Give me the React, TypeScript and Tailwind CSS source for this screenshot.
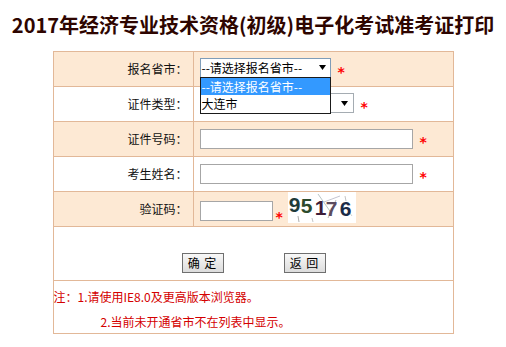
import React from "react";

const cjk = { fontFamily: '"Noto Sans CJK SC", "Noto Sans", sans-serif' };

function Star({ className = "" }: { className?: string }) {
  return (
    <span
      className={"text-[#ff0000] text-[14px] font-bold leading-none " + className}
      style={{ fontFamily: '"DejaVu Sans", sans-serif' }}
    >
      *
    </span>
  );
}

function Arrow() {
  return (
    <svg width="7" height="5" viewBox="0 0 7 5" className="shrink-0">
      <polygon points="0,0 7,0 3.5,5" fill="#000" />
    </svg>
  );
}

function Row({ label, shaded, children }: { label: string; shaded?: boolean; children?: React.ReactNode }) {
  return (
    <div className={"flex h-[35px] border-b border-[#e2b898] " + (shaded ? "bg-[#fde9d4]" : "bg-white")}>
      <div className="w-[140px] border-r border-[#e2b898] flex items-center justify-end pr-[5px] text-[12px] text-[#111]">
        {label}
      </div>
      <div className="flex-1 flex items-center pl-[6px] relative">{children}</div>
    </div>
  );
}

function Captcha() {
  return (
    <div className="relative w-[68px] h-[31px] bg-white ml-[5px] self-start mt-[0px] overflow-hidden">
      <svg className="absolute inset-0" width="68" height="31" viewBox="0 0 68 31">
        <line x1="30" y1="2" x2="44" y2="22" stroke="#9aa" strokeWidth="0.7" />
        <line x1="36" y1="10" x2="52" y2="4" stroke="#aab" strokeWidth="0.7" />
        <line x1="40" y1="26" x2="48" y2="8" stroke="#999" strokeWidth="0.7" />
        <line x1="10" y1="24" x2="11" y2="30" stroke="#888" strokeWidth="0.7" />
        <line x1="24" y1="26" x2="25" y2="30" stroke="#aaa" strokeWidth="0.7" />
        <line x1="57" y1="4" x2="58" y2="9" stroke="#aaa" strokeWidth="0.7" />
        <line x1="61" y1="20" x2="64" y2="24" stroke="#bbb" strokeWidth="0.7" />
      </svg>
      <div
        className="relative flex items-start pl-[1px] pt-[2px] text-[21px] font-bold leading-none"
        style={{ fontFamily: '"Liberation Sans", Arial, sans-serif' }}
      >
        <span className="text-[#1e3b3a] w-[12px]">9</span>
        <span className="text-[#2c4a2c] w-[12px] mt-[1px]">5</span>
        <span className="text-[#3d1c38] w-[11px] ml-[2px] mt-[3px]">1</span>
        <span className="text-[#5d4c5e] w-[13px] mt-[4px]">7</span>
        <span className="text-[#1b2b48] w-[12px] ml-[1px] mt-[4px]">6</span>
      </div>
    </div>
  );
}

export default function App() {
  return (
    <div className="w-[506px] h-[347px] bg-white overflow-hidden" style={cjk}>
      <div className="h-[51px] flex items-center justify-center pb-[2px]">
        <h1 className="text-[20px] font-bold text-[#2e0500] tracking-[0px] whitespace-nowrap">
          2017年经济专业技术资格(初级)电子化考试准考证打印
        </h1>
      </div>
      <div className="w-[401px] mx-auto border-l border-r border-t border-[#e2b898]">
        <Row label="报名省市：" shaded>
          <div className="w-[131px] h-[20px] mt-[-3px] bg-white border border-[#7f9db9] flex items-center justify-between pl-[1px] pr-[4px] text-[12px] text-black">
            <span>--请选择报名省市--</span>
            <Arrow />
          </div>
          <Star className="ml-[7px] mt-[5px]" />
          <div className="absolute left-[6px] top-[25px] w-[131px] h-[37px] bg-white border border-[#1a1a1a] z-10 text-[12px]">
            <div className="h-[17px] bg-[#3399ff] text-white flex items-center pl-[1px]">--请选择报名省市--</div>
            <div className="h-[18px] text-black flex items-center pl-[1px]">大连市</div>
          </div>
        </Row>
        <Row label="证件类型：">
          <div className="w-[154px] h-[20px] mt-[-2px] bg-white border border-[#a5acb2] flex items-center justify-end pr-[5px]">
            <Arrow />
          </div>
          <Star className="ml-[7px] mt-[5px]" />
        </Row>
        <Row label="证件号码：" shaded>
          <div className="w-[213px] h-[20px] bg-white border border-[#a6a6a6]" />
          <Star className="ml-[7px] mt-[6px]" />
        </Row>
        <Row label="考生姓名：">
          <div className="w-[213px] h-[20px] bg-white border border-[#a6a6a6]" />
          <Star className="ml-[7px] mt-[6px]" />
        </Row>
        <Row label="验证码：" shaded>
          <div className="w-[73px] h-[20px] mt-[4px] bg-white border border-[#a6a6a6]" />
          <Star className="ml-[3px] mt-[16px]" />
          <Captcha />
        </Row>
        <div className="h-[54px] border-b border-[#e2b898] bg-white flex justify-center gap-[60px] pt-[26px] pl-[1px]">
          <button className="w-[42px] h-[20px] border border-[#6f6f6f] bg-gradient-to-b from-[#f8f8f8] to-[#dcdcdc] text-[12px] text-black leading-none flex items-center justify-center tracking-[1px]">
            确&nbsp;定
          </button>
          <button className="w-[42px] h-[20px] border border-[#6f6f6f] bg-gradient-to-b from-[#f8f8f8] to-[#dcdcdc] text-[12px] text-black leading-none flex items-center justify-center tracking-[1px]">
            返&nbsp;回
          </button>
        </div>
        <div className="h-[53px] border-b border-[#e2b898] bg-white text-[12px] text-[#d40000] pt-[3px] leading-[25px]">
          <div>注：1.请使用IE8.0及更高版本浏览器。</div>
          <div className="pl-[47px]">2.当前未开通省市不在列表中显示。</div>
        </div>
      </div>
    </div>
  );
}
